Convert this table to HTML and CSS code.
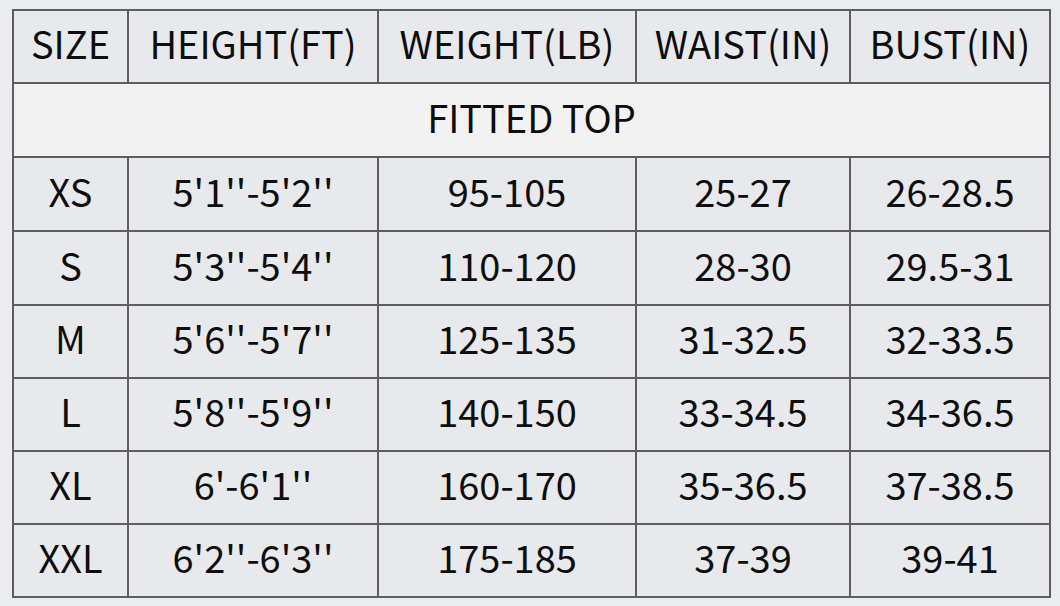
FILE: index.html
```html
<!DOCTYPE html>
<html>
<head>
<meta charset="utf-8">
<link rel="stylesheet" href="styles.css">
</head>
<body>
<div class="chart">
  <div class="cell">SIZE</div>
  <div class="cell">HEIGHT(FT)</div>
  <div class="cell">WEIGHT(LB)</div>
  <div class="cell">WAIST(IN)</div>
  <div class="cell">BUST(IN)</div>

  <div class="cell section">FITTED TOP</div>

  <div class="cell">XS</div>
  <div class="cell">5'1''-5'2''</div>
  <div class="cell">95-105</div>
  <div class="cell">25-27</div>
  <div class="cell">26-28.5</div>

  <div class="cell">S</div>
  <div class="cell">5'3''-5'4''</div>
  <div class="cell">110-120</div>
  <div class="cell">28-30</div>
  <div class="cell">29.5-31</div>

  <div class="cell">M</div>
  <div class="cell">5'6''-5'7''</div>
  <div class="cell">125-135</div>
  <div class="cell">31-32.5</div>
  <div class="cell">32-33.5</div>

  <div class="cell">L</div>
  <div class="cell">5'8''-5'9''</div>
  <div class="cell">140-150</div>
  <div class="cell">33-34.5</div>
  <div class="cell">34-36.5</div>

  <div class="cell">XL</div>
  <div class="cell">6'-6'1''</div>
  <div class="cell">160-170</div>
  <div class="cell">35-36.5</div>
  <div class="cell">37-38.5</div>

  <div class="cell">XXL</div>
  <div class="cell">6'2''-6'3''</div>
  <div class="cell">175-185</div>
  <div class="cell">37-39</div>
  <div class="cell">39-41</div>
</div>
</body>
</html>
```

FILE: styles.css
```css
html, body {
  margin: 0;
  padding: 0;
  background: #ebecef;
}
body {
  padding: 9px 0 0 12px;
  font-family: "Noto Sans CJK SC", "Noto Sans", sans-serif;
  color: #0e0e0e;
}
.chart {
  display: grid;
  grid-template-columns: 113px 248px 256px 212px 198px;
  grid-template-rows: 71px 72px 72px 72px 71px 71px 71px 71px;
  gap: 2px;
  padding: 2px;
  width: max-content;
  background: #5e5e60;
}
.cell {
  background: #e8e9ec;
  display: flex;
  align-items: center;
  justify-content: center;
  padding-bottom: 7px;
  font-size: 38px;
  font-weight: 400;
  line-height: 1;
  white-space: nowrap;
}
.section {
  grid-column: 1 / -1;
  background: #f2f2f2;
}
```
